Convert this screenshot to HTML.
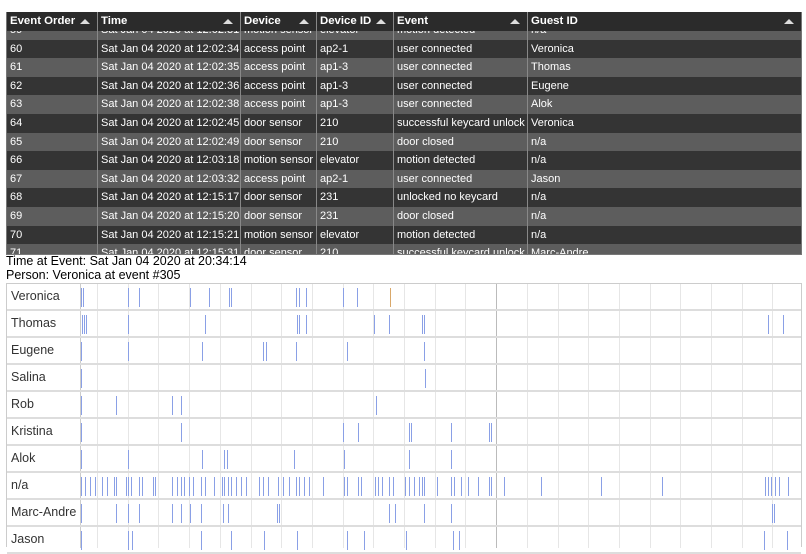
<!DOCTYPE html>
<html><head><meta charset="utf-8"><style>
*{margin:0;padding:0;box-sizing:border-box}
body{width:806px;height:547px;overflow:hidden;background:#fff;font-family:"Liberation Sans",Arial,sans-serif;position:relative}
#tbl{position:absolute;left:6px;top:12px;width:796px;height:243px;overflow:hidden;background:#555;border:1px solid #777;border-top:none}
.r{position:absolute;left:0;width:794px;height:18.6px;font-size:11px;color:#fff;line-height:18.6px}
.r span{position:absolute;top:0;height:100%;padding-left:3px;border-left:1px solid #888;white-space:nowrap;overflow:hidden}
.h{background:#2b2b2b;font-weight:bold;font-size:11.4px;height:19px;line-height:19px;top:0;z-index:2}
.h span:after{content:"";position:absolute;right:7px;top:7px;border-left:5px solid transparent;border-right:5px solid transparent;border-bottom:5px solid #ddd}
.d{background:#343434}.l{background:#5d5d5d}
#info{position:absolute;left:6px;top:255px;font-size:12.5px;line-height:13.5px;color:#000}
#chart{position:absolute;left:6px;top:283px;width:796px;height:264px;border:1px solid #ccc;border-bottom:none}
.row{position:absolute;left:0;width:794px;height:27px;border-bottom:2px solid #ddd;font-size:12.5px;color:#333}
.row b{font-weight:normal;position:absolute;left:4px;top:5px}
.g{position:absolute;top:0;width:1px;height:264px;background:#e6e6e6}
.bar{position:absolute;width:1px;background:#8aa0e6}
</style></head><body>
<div id="tbl"></div>
<div id="info">Time at Event: Sat Jan 04 2020 at 20:34:14<br>Person: Veronica at event #305</div>
<div id="chart"></div>
<script>
var cols=[0,90,233,309,386,520,794];
var t=document.getElementById('tbl');
function row(cls,top,vals){var d=document.createElement('div');d.className='r '+cls;d.style.top=top+'px';var h='';for(var i=0;i<6;i++){h+='<span style="left:'+cols[i]+'px;width:'+(cols[i+1]-cols[i])+'px;'+(i==0?'border-left:none':'')+'">'+vals[i]+'</span>';}d.innerHTML=h;t.appendChild(d);}
row('h',0,['Event Order','Time','Device','Device ID','Event','Guest ID']);
var data=[
['59','Sat Jan 04 2020 at 12:02:31','motion sensor','elevator','motion detected','n/a'],
['60','Sat Jan 04 2020 at 12:02:34','access point','ap2-1','user connected','Veronica'],
['61','Sat Jan 04 2020 at 12:02:35','access point','ap1-3','user connected','Thomas'],
['62','Sat Jan 04 2020 at 12:02:36','access point','ap1-3','user connected','Eugene'],
['63','Sat Jan 04 2020 at 12:02:38','access point','ap1-3','user connected','Alok'],
['64','Sat Jan 04 2020 at 12:02:45','door sensor','210','successful keycard unlock','Veronica'],
['65','Sat Jan 04 2020 at 12:02:49','door sensor','210','door closed','n/a'],
['66','Sat Jan 04 2020 at 12:03:18','motion sensor','elevator','motion detected','n/a'],
['67','Sat Jan 04 2020 at 12:03:32','access point','ap2-1','user connected','Jason'],
['68','Sat Jan 04 2020 at 12:15:17','door sensor','231','unlocked no keycard','n/a'],
['69','Sat Jan 04 2020 at 12:15:20','door sensor','231','door closed','n/a'],
['70','Sat Jan 04 2020 at 12:15:21','motion sensor','elevator','motion detected','n/a'],
['71','Sat Jan 04 2020 at 12:15:31','door sensor','210','successful keycard unlock','Marc-Andre']];
for(var i=0;i<data.length;i++){row(i%2?'d':'l',28.2+(i-1)*18.6-0.6,data[i]);}
var c=document.getElementById('chart');
var names=['Veronica','Thomas','Eugene','Salina','Rob','Kristina','Alok','n/a','Marc-Andre','Jason'];
var bars=[
[80,82,127,138,189,208,228,230,295,298,305,342,356],
[81,83,85,127,204,296,298,305,373,388,421,423,767,782],
[80,127,201,262,265,295,346,423],
[80,424],
[80,115,171,180,375],
[80,180,342,357,408,410,450,488,490],
[80,127,201,223,226,293,343,408,450],
[80,84,89,94,101,106,113,115,125,127,130,138,141,152,154,171,176,180,183,188,192,200,204,213,221,223,227,230,235,240,245,258,262,267,277,282,288,295,298,303,308,322,343,346,357,360,374,377,381,388,392,404,408,413,418,421,423,436,450,453,460,467,477,488,490,503,540,600,661,764,767,770,774,778,787],
[80,115,127,138,171,180,189,200,222,227,276,278,388,394,423,450,771,773],
[80,127,131,200,230,263,296,346,363,405,452,458,763,786]];
var h='';
for(var k=0;k<24;k++){var x=Math.round(96+30.7*k-6);if(x>794)break;h+='<div class="g" style="left:'+x+'px;'+(Math.abs(x+6-494)<3?'background:#bbb':'')+'"></div>';}
h+='<div class="g" style="left:73px;background:#ccc"></div>';
for(var r=0;r<10;r++){h+='<div class="row" style="top:'+(r*27)+'px"><b>'+names[r]+'</b></div>';
for(var j=0;j<bars[r].length;j++){h+='<div class="bar" style="left:'+(bars[r][j]-6)+'px;top:'+(r*27+4)+'px;height:19px"></div>';}}
h+='<div class="bar" style="left:383px;top:4px;height:19px;background:#d9a86a"></div>';
c.innerHTML=h;
</script>
</body></html>
